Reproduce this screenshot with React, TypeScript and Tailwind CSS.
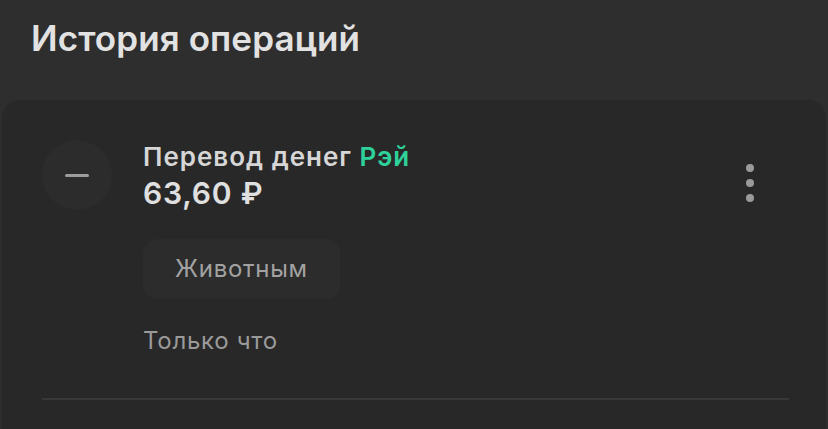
import React from 'react';

function MoreDots() {
  return (
    <div className="flex flex-col items-center gap-[7px] px-2">
      <span className="w-[8px] h-[8px] rounded-full bg-[#9a9a9a]" />
      <span className="w-[8px] h-[8px] rounded-full bg-[#9a9a9a]" />
      <span className="w-[8px] h-[8px] rounded-full bg-[#9a9a9a]" />
    </div>
  );
}

export default function App() {
  return (
    <div
      className="w-[828px] h-[429px] overflow-hidden bg-[#2e2e2e] flex flex-col"
      style={{ fontFamily: 'Inter, "Noto Sans", sans-serif' }}
    >
      <h1 className="px-[31px] pt-[12px] h-[100px] text-[35px] font-semibold text-[#e2e2e2] tracking-[0.1px]">
        История операций
      </h1>

      <div className="flex-1 mx-[2px] rounded-t-[18px] bg-[#282828] px-[40px] pt-[40px]">
        <div className="flex items-start">
          <div className="w-[70px] h-[70px] rounded-full bg-[#2c2c2c] flex items-center justify-center shrink-0">
            <span className="w-[24px] h-[3px] rounded-full bg-[#9c9c9c]" />
          </div>

          <div className="flex-1 pl-[31px]">
            <div className="text-[26px] leading-[34px] font-semibold text-[#d6d6d6] tracking-[1px]">
              Перевод денег <span className="text-[#2fd19b]">Рэй</span>
            </div>
            <div className="text-[30px] leading-[38px] font-semibold text-[#e0e0e0] tracking-[0.8px]">
              63,60 ₽
            </div>

            <div className="mt-[27px] inline-flex items-center h-[60px] px-[32px] rounded-[14px] bg-[#2c2c2c] text-[24px] text-[#a2a2a2] tracking-[0.7px]">
              Животным
            </div>

            <div className="mt-[24px] text-[24px] text-[#9a9a9a] tracking-[0.7px]">Только что</div>
          </div>

          <div className="pt-[24px] pr-[24px]">
            <MoreDots />
          </div>
        </div>

        <div className="mt-[39px] h-[2px] w-[747px] bg-[#383838]" />
      </div>
    </div>
  );
}
